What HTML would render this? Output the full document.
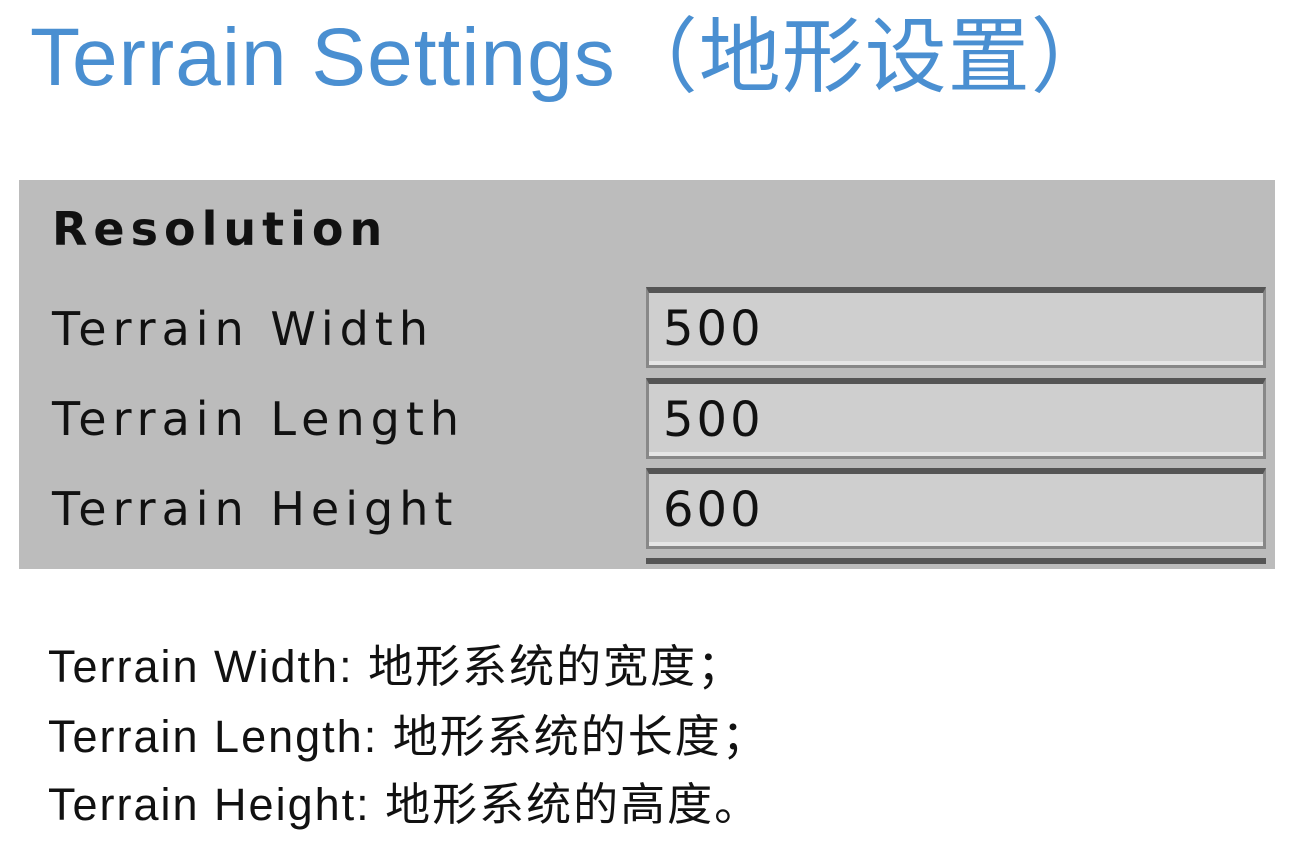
<!DOCTYPE html>
<html><head><meta charset="utf-8"><style>
body{margin:0;width:1310px;height:854px;background:#fff;position:relative;overflow:hidden;font-family:"Liberation Sans","Noto Sans CJK SC",sans-serif}
.t{position:absolute;left:30px;top:-10px;font-size:82px;color:#4a8fd1;white-space:nowrap;letter-spacing:1px}
.p{position:absolute;left:19px;top:180px;width:1256px;height:389px;background:#bcbcbc}
.l{position:absolute;left:52px;font-family:"DejaVu Sans",sans-serif;font-size:46px;color:#111;white-space:nowrap;letter-spacing:6px}
.f{position:absolute;left:646px;width:614px;height:72px;background:#cfcfcf;border:3px solid #888;border-top:6px solid #555;box-shadow:inset 0 -4px 0 #e6e6e6}
.f span{position:absolute;left:14px;top:8px;font-family:"DejaVu Sans",sans-serif;font-size:48px;color:#111;letter-spacing:3px}
.b{position:absolute;left:48px;font-size:45px;color:#111;white-space:nowrap;letter-spacing:2px}
</style></head><body>
<div class="t">Terrain Settings（地形设置）</div>
<div class="p"></div>
<div class="l" style="top:202px;font-weight:bold;letter-spacing:6px">Resolution</div>
<div class="l" style="top:302px">Terrain Width</div>
<div class="l" style="top:392px">Terrain Length</div>
<div class="l" style="top:482px">Terrain Height</div>
<div class="f" style="top:287px"><span>500</span></div>
<div class="f" style="top:378px"><span>500</span></div>
<div class="f" style="top:468px"><span>600</span></div>
<div style="position:absolute;left:646px;top:558px;width:620px;height:6px;background:#555"></div>
<div class="b" style="top:630px">Terrain Width: 地形系统的宽度；</div>
<div class="b" style="top:700px">Terrain Length: 地形系统的长度；</div>
<div class="b" style="top:768px">Terrain Height: 地形系统的高度。</div>
</body></html>
